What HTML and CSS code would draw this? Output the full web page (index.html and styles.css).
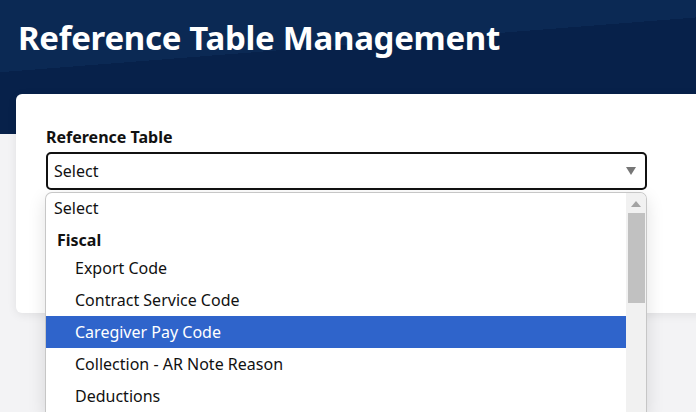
FILE: index.html
```html
<!DOCTYPE html>
<html lang="en">
<head>
<meta charset="utf-8">
<title>Reference Table Management</title>
<link rel="stylesheet" href="styles.css">
</head>
<body>
<header class="hero">
  <h1 class="hero-title">Reference Table Management</h1>
</header>
<main class="card">
  <label class="field-label">Reference Table</label>
  <div class="select-wrap">
    <div class="select-box">
      <span class="select-value">Select</span>
      <svg class="select-arrow" width="10" height="8" viewBox="0 0 10 8"><path d="M0 0H10L5 8Z" fill="#767676"/></svg>
    </div>
    <div class="dropdown">
      <ul class="options">
        <li class="opt opt-top">Select</li>
        <li class="opt-group">Fiscal</li>
        <li class="opt opt-sub">Export Code</li>
        <li class="opt opt-sub">Contract Service Code</li>
        <li class="opt opt-sub selected">Caregiver Pay Code</li>
        <li class="opt opt-sub">Collection - AR Note Reason</li>
        <li class="opt opt-sub">Deductions</li>
      </ul>
      <div class="scrollbar">
        <svg class="scroll-up" width="10" height="6" viewBox="0 0 10 6"><path d="M0 6H10L5 0Z" fill="#a3a3a3"/></svg>
        <div class="scroll-thumb"></div>
      </div>
    </div>
  </div>
  <button class="action-btn" aria-label="Load"></button>
</main>
</body>
</html>
```
FILE: styles.css
```css
html, body {
  margin: 0;
  padding: 0;
}
body {
  background: #f3f3f5;
  font-family: "Noto Sans", "Open Sans", sans-serif;
  color: #111;
  overflow: hidden;
  width: 696px;
  height: 412px;
}
.hero {
  height: 134px;
  box-sizing: border-box;
  padding: 15px 0 0 18px;
  background: linear-gradient(175.5deg, #0b2954 72px, #07214a 72px);
}
.hero-title {
  margin: 0;
  font-size: 33px;
  line-height: 46px;
  font-weight: 700;
  color: #fff;
  letter-spacing: -0.3px;
}
.card {
  margin: -40px 0 0 16px;
  width: 720px;
  height: 219px;
  box-sizing: border-box;
  padding: 32px 0 0 30px;
  background: #fff;
  border-radius: 6px;
  box-shadow: 0 2px 10px rgba(0, 0, 0, 0.08);
}
.field-label {
  display: block;
  font-size: 16px;
  line-height: 22px;
  font-weight: 700;
  color: #111;
}
.select-wrap {
  position: relative;
  margin-top: 4px;
  width: 601px;
}
.select-box {
  height: 38px;
  box-sizing: border-box;
  border: 2px solid #111;
  border-radius: 5px;
  display: flex;
  align-items: center;
  justify-content: space-between;
  padding: 0 9px 0 6px;
  background: #fff;
}
.select-value {
  font-size: 16px;
  line-height: 22px;
}
.select-arrow {
  display: block;
}
.dropdown {
  position: absolute;
  z-index: 2;
  top: 40px;
  left: -1px;
  width: 602px;
  height: 220px;
  box-sizing: border-box;
  border: 1px solid rgba(0, 0, 0, 0.22);
  border-bottom: none;
  border-radius: 7px 7px 0 0;
  background: #fff;
  display: flex;
  box-shadow: 0 6px 18px rgba(0, 0, 0, 0.12);
  overflow: hidden;
}
.options {
  list-style: none;
  margin: 0;
  padding: 0;
  flex: 1;
}
.opt {
  height: 32px;
  line-height: 32px;
  font-size: 16px;
  padding-left: 8px;
  white-space: nowrap;
}
.opt-top {
  height: 31px;
  line-height: 31px;
}
.opt-group {
  height: 28px;
  box-sizing: border-box;
  padding: 4px 0 0 11px;
  line-height: 24px;
  font-size: 16px;
  font-weight: 700;
}
.opt-sub {
  padding-left: 29px;
}
.selected {
  background: #2f64cb;
  color: #fff;
}
.scrollbar {
  width: 20px;
  background: #f1f1f1;
  position: relative;
}
.scroll-up {
  position: absolute;
  top: 8px;
  left: 5px;
}
.scroll-thumb {
  position: absolute;
  top: 20px;
  left: 2px;
  width: 17px;
  height: 90px;
  background: #c1c1c1;
}
.action-btn {
  display: block;
  margin: 33px 0 0 -1px;
  height: 40px;
  width: 120px;
  border: none;
  border-radius: 4px;
  background: #0b2954;
}
```
